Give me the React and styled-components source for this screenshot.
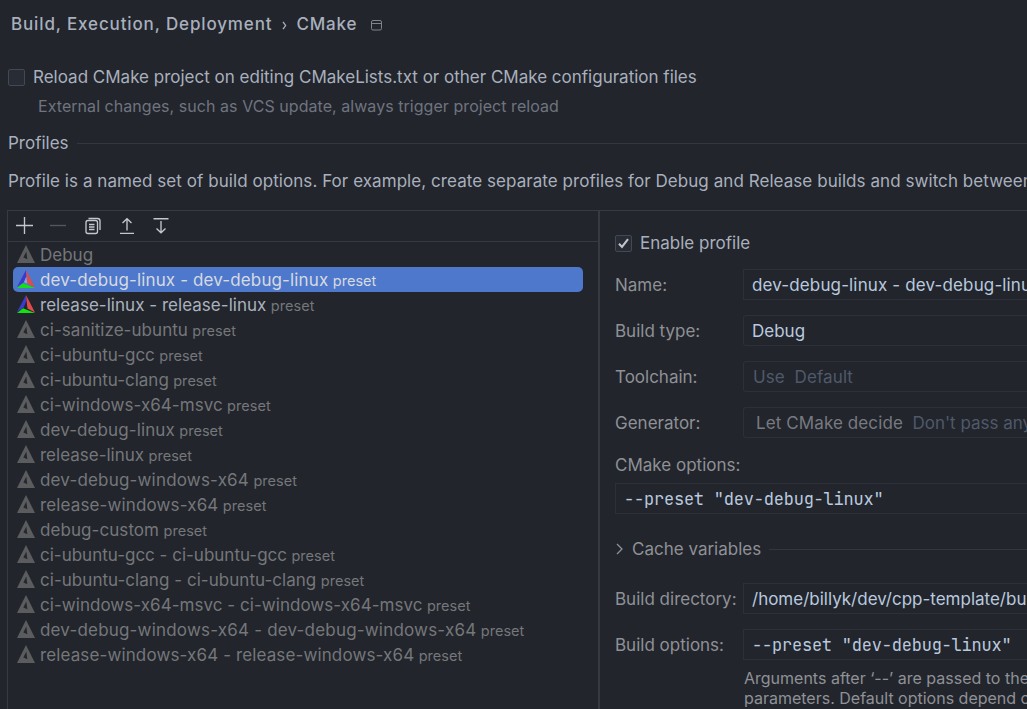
import React from 'react';
import styled, { createGlobalStyle } from 'styled-components';

const Global = createGlobalStyle`
  * { box-sizing: border-box; }
  html, body { margin: 0; overflow: hidden; background: #22252c; }
  body { font-family: Inter, sans-serif; font-size: 17px; color: #a9b0bd; }
`;

const Page = styled.div`
  width: 1027px;
  height: 709px;
  overflow: hidden;
  display: flex;
  flex-direction: column;
  white-space: pre;
  background: #22252c;
`;

const Text = styled.span`
  color: ${p => p.$color || 'inherit'};
  font-size: ${p => p.$size || 17}px;
  letter-spacing: ${p => p.$ls || 0}px;
  white-space: pre;
`;

const Breadcrumb = styled.header`
  height: 48px;
  display: flex;
  align-items: center;
  padding-left: 11px;
  font-weight: 500;
  color: #a9b0bd;
`;

const Chevron = styled.svg`
  margin: 3px 9px 0 10px;
`;

const CrumbIcon = styled.svg`
  margin: 2px 0 0 14px;
`;

const ReloadRow = styled.label`
  height: 28px;
  margin-top: 15px;
  padding-left: 8px;
  display: flex;
  align-items: center;
  gap: 8px;
`;

const Box = styled.span`
  width: 17px;
  height: 17px;
  flex: none;
  border: 1px solid #434854;
  border-radius: 2px;
  background: #282c34;
  display: flex;
  align-items: center;
  justify-content: center;
`;

const Hint = styled.div`
  height: 30px;
  line-height: 30px;
  padding-left: 38px;
`;

const SectionTitle = styled.div`
  height: 28px;
  margin-top: ${p => p.$top || 0}px;
  padding-left: ${p => p.$pad || 0}px;
  display: flex;
  align-items: center;
  gap: 8px;
  &::after {
    content: '';
    flex: 1;
    height: 1px;
    background: #33373f;
  }
`;

const Description = styled.div`
  height: 53px;
  padding-left: 8px;
  line-height: 49px;
`;

const Panel = styled.section`
  flex: 1;
  margin-left: 7px;
  display: flex;
  border-top: 1px solid #363a42;
  border-left: 1px solid #363a42;
`;

const ListPane = styled.div`
  width: 592px;
  flex: none;
  border-right: 2px solid #363a42;
`;

const Toolbar = styled.div`
  height: 31px;
  display: flex;
  align-items: center;
  gap: 14.25px;
  padding: 0 0 2px 6px;
  border-bottom: 1px solid #363a42;
`;

const Row = styled.div`
  height: 25px;
  width: 570px;
  margin-left: 5px;
  padding-left: 4px;
  display: flex;
  align-items: center;
  border-radius: 5px;
  background: ${p => (p.$selected ? '#4d78cc' : 'transparent')};
  color: ${p => (p.$selected ? '#d7dae0' : p.$active ? '#abb2bf' : '#75777a')};
`;

const RowIcon = styled.svg`
  flex: none;
  margin: -1px 5px 0 0;
`;

const Preset = styled.span`
  font-size: 14.5px;
  margin-left: 4.4px;
  padding-top: 2px;
  letter-spacing: 0.04px;
  color: ${p => (p.$selected ? '#d7dae0' : '#75777a')};
`;

const Form = styled.div`
  flex: 1;
  min-width: 0;
  padding: 18px 0 0 15px;
  color: #8f9196;
`;

const EnableRow = styled.label`
  height: 28px;
  display: flex;
  align-items: center;
  gap: 8px;
  color: #a9b0bd;
`;

const FieldRow = styled.div`
  height: 31px;
  margin-top: ${p => p.$top || 15}px;
  display: flex;
  align-items: center;
`;

const Label = styled.span`
  width: 128px;
  flex: none;
`;

const Input = styled.div`
  height: 31px;
  flex: 1;
  min-width: 0;
  overflow: hidden;
  display: flex;
  align-items: center;
  padding-left: ${p => p.$pad || 8}px;
  border: solid #2d3038;
  border-width: 1px 0 1px 1px;
  border-radius: ${p => (p.$round ? '3px 0 0 3px' : 0)};
  color: #b9c9df;
`;

const Code = styled.span`
  font-family: "JetBrains Mono", "DejaVu Sans Mono", monospace;
  font-size: 17px;
  letter-spacing: -0.22px;
`;

const OptionsLabel = styled.div`
  height: 30px;
  margin-top: 12px;
  line-height: 30px;
`;

const Help = styled.div`
  margin: 8px 0 0 129px;
  line-height: 20px;
`;

const LogoMark = ({ on, selected }) => (
  <RowIcon width="18" height="18" viewBox="0 0 18 18">
    {on ? (
      <>
        <path d="M9 0 0 17 7 12.2 9.4 6.5Z" fill="#3a3acb" />
        <path d="M9 0 10.4 13.6 18 17.5Z" fill="#e04a4a" />
        <path d="M0 18 6 13.3 18 18Z" fill="#12e212" />
        <path d="M9.3 6.5 7 12.2 10.4 13.7Z" fill={selected ? '#8ba0d8' : '#22252c'} />
      </>
    ) : (
      <>
        <path d="M9 0 0 18H18Z" fill="#5b5c5e" />
        <path d="M9.3 6.5 6.3 12.6 10.4 14.2Z" fill="#25282e" />
      </>
    )}
  </RowIcon>
);

const ToolIcon = ({ d, dim, children }) => (
  <svg width="20" height="20" viewBox="0 0 20 20" fill="none" stroke={dim ? '#55575b' : '#c4c7cd'} strokeWidth="1.35">
    <path d={d} />
    {children}
  </svg>
);

const profiles = [
  { name: 'Debug', plain: true },
  { name: 'dev-debug-linux - dev-debug-linux', ls: 0.13, active: true, selected: true },
  { name: 'release-linux - release-linux', ls: 0.03, active: true },
  { name: 'ci-sanitize-ubuntu', ls: 0.05 },
  { name: 'ci-ubuntu-gcc' },
  { name: 'ci-ubuntu-clang' },
  { name: 'ci-windows-x64-msvc', ls: 0.05 },
  { name: 'dev-debug-linux', ls: 0.1 },
  { name: 'release-linux' },
  { name: 'dev-debug-windows-x64', ls: 0.18 },
  { name: 'release-windows-x64', ls: 0.13 },
  { name: 'debug-custom', ls: 0.07 },
  { name: 'ci-ubuntu-gcc - ci-ubuntu-gcc' },
  { name: 'ci-ubuntu-clang - ci-ubuntu-clang', ls: 0.04 },
  { name: 'ci-windows-x64-msvc - ci-windows-x64-msvc', ls: 0.04 },
  { name: 'dev-debug-windows-x64 - dev-debug-windows-x64', ls: 0.19 },
  { name: 'release-windows-x64 - release-windows-x64', ls: 0.12 },
];

export default function App() {
  return (
    <Page>
      <Global />
      <Breadcrumb>
        <Text $ls={0.86}>Build, Execution, Deployment</Text>
        <Chevron width="5" height="9" viewBox="0 0 5 9" fill="none" stroke="#a9b0bd" strokeWidth="1.3">
          <path d="M1 .8 3.6 4.5 1 8.2" />
        </Chevron>
        <Text $ls={0.86}>CMake</Text>
        <CrumbIcon width="11" height="11" viewBox="0 0 11 11" fill="none" stroke="#7f838b">
          <rect x=".5" y=".5" width="10" height="9.5" rx="1.5" />
          <path d="M.5 3.5h10" />
        </CrumbIcon>
      </Breadcrumb>
      <ReloadRow>
        <Box />
        <Text>Reload CMake project on editing CMakeLists.txt or other CMake configuration files</Text>
      </ReloadRow>
      <Hint><Text $size={16} $ls={0.05} $color="#6f747f">External changes, such as VCS update, always trigger project reload</Text></Hint>
      <SectionTitle $top={8} $pad={8}>
        <Text>Profiles</Text>
      </SectionTitle>
      <Description>
        <Text $ls={0.06}>Profile is a named set of build options. For example, create separate profiles for Debug and Release builds and switch between</Text>
      </Description>
      <Panel>
        <ListPane>
          <Toolbar>
            <ToolIcon d="M10.5 2v17M2 10.5h17" />
            <ToolIcon dim d="M2 10.5h16" />
            <ToolIcon d="M5.5 3.5h9q2.5 0 2.5 2.5v9">
              <rect x="3" y="5.5" width="11.5" height="13" rx="2" />
              <path d="M6 9.5h5.5M6 12h5.5M6 14.5h5.5" />
            </ToolIcon>
            <ToolIcon d="M3 18.3h14M10 15.5V4M5.5 8 10 3.7 14.5 8" />
            <ToolIcon d="M2.5 3.7h15M10 6v12M5.5 13.5 10 17.8l4.5-4.3" />
          </Toolbar>
          {profiles.map(p => (
            <Row key={p.name} $selected={p.selected} $active={p.active}>
              <LogoMark on={p.active} selected={p.selected} />
              <Text $ls={p.ls}>{p.name}</Text>
              {!p.plain && <Preset $selected={p.selected}>preset</Preset>}
            </Row>
          ))}
        </ListPane>
        <Form>
          <EnableRow>
            <Box>
              <svg width="13" height="13" viewBox="0 0 13 13" fill="none" stroke="#c0c5ce" strokeWidth="2.1">
                <path d="M2 6.8 5 10 11 2.2" />
              </svg>
            </Box>
            <Text>Enable profile</Text>
          </EnableRow>
          <FieldRow $top={12}>
            <Label>Name:</Label>
            <Input><Text $ls={0.14}>dev-debug-linux - dev-debug-linux</Text></Input>
          </FieldRow>
          <FieldRow>
            <Label>Build type:</Label>
            <Input $round><Text>Debug</Text></Input>
          </FieldRow>
          <FieldRow>
            <Label>Toolchain:</Label>
            <Input $round $pad={9}><Text $ls={0.1} $color="#50596a">Use  Default</Text></Input>
          </FieldRow>
          <FieldRow>
            <Label>Generator:</Label>
            <Input $round $pad={12}>
              <Text $ls={0.1} $color="#777a80">Let CMake decide</Text>
              <Text $color="#50596a">{"  Don't pass any"}</Text>
            </Input>
          </FieldRow>
          <OptionsLabel><Text>CMake options:</Text></OptionsLabel>
          <FieldRow $top={3}>
            <Input><Code>--preset "dev-debug-linux"</Code></Input>
          </FieldRow>
          <SectionTitle $top={21}>
            <svg width="9" height="12" viewBox="0 0 9 12" fill="none" stroke="#8f9196" strokeWidth="1.3">
              <path d="M2 1l5 5-5 5" />
            </svg>
            <Text>Cache variables</Text>
          </SectionTitle>
          <FieldRow $top={20}>
            <Label>Build directory:</Label>
            <Input><Text>/home/billyk/dev/cpp-template/build</Text></Input>
          </FieldRow>
          <FieldRow>
            <Label>Build options:</Label>
            <Input><Code>--preset "dev-debug-linux"</Code></Input>
          </FieldRow>
          <Help>
            <Text $size={16}>{"Arguments after ‘--’ are passed to the\nparameters. Default options depend on"}</Text>
          </Help>
        </Form>
      </Panel>
    </Page>
  );
}
